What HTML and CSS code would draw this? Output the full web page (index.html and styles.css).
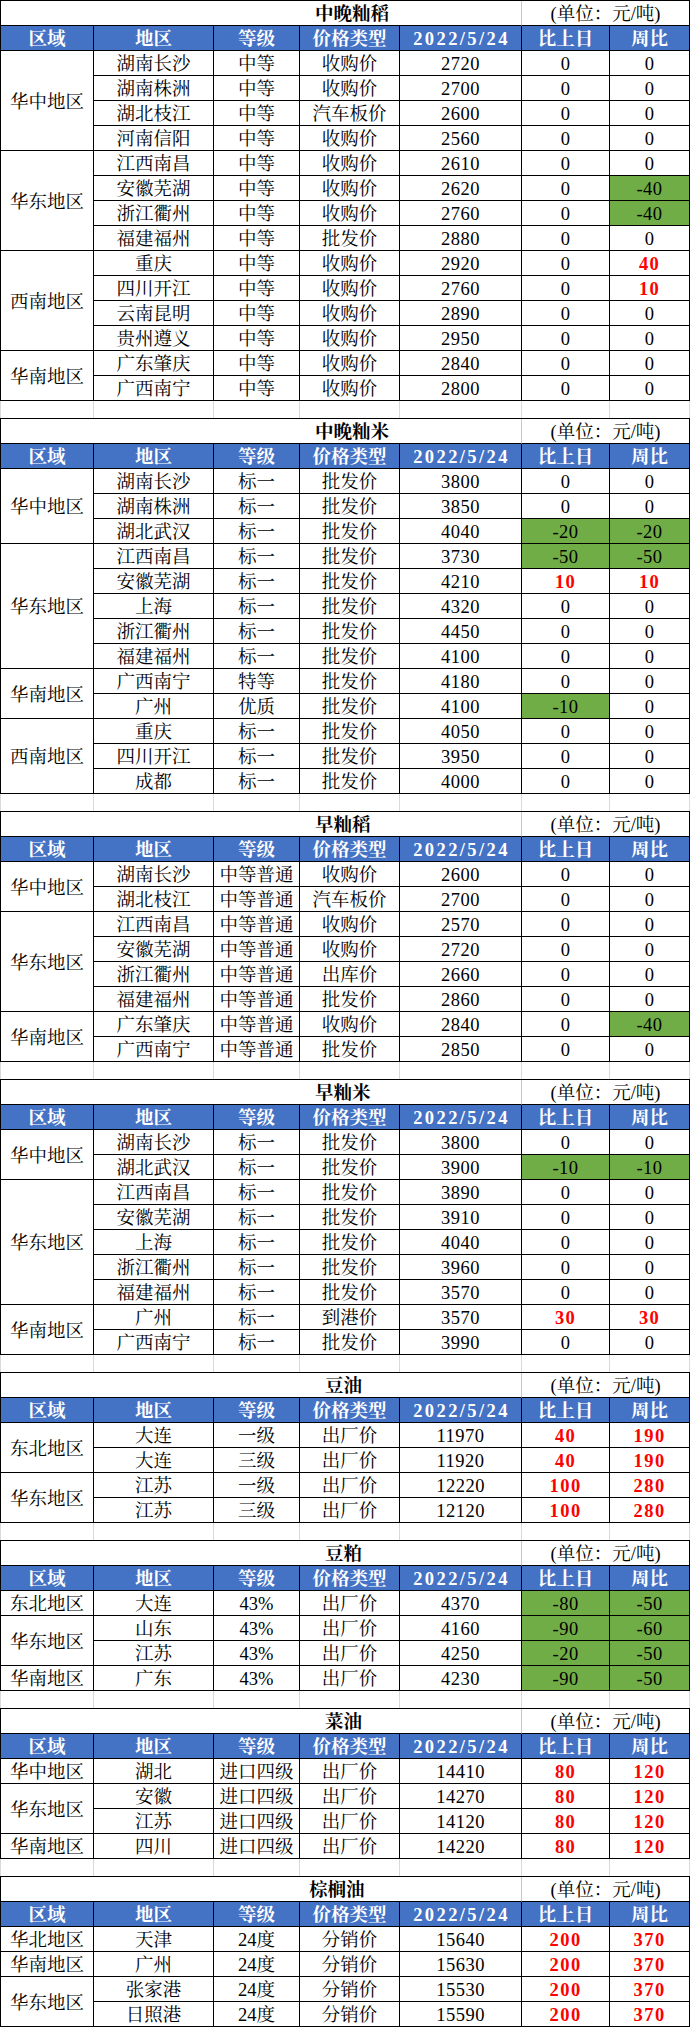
FILE: index.html
```html
<!DOCTYPE html>
<html lang="zh-CN">
<head>
<meta charset="utf-8">
<title>农产品价格</title>
<link rel="stylesheet" href="styles.css">
</head>
<body>

<table class="sheet">
<colgroup><col class="w1"><col class="w2"><col class="w3"><col class="w4"><col class="w5"><col class="w6"><col class="w7"></colgroup>
<tr><td colspan="5" class="title t-a">中晚籼稻</td><td colspan="2" class="unit">(单位：元/吨)</td></tr>
<tr class="head"><th>区域</th><th>地区</th><th>等级</th><th>价格类型</th><th class="date">2022/5/24</th><th>比上日</th><th>周比</th></tr>
<tr><td class="region" rowspan="4">华中地区</td><td>湖南长沙</td><td>中等</td><td>收购价</td><td class="num">2720</td><td class="num">0</td><td class="num">0</td></tr>
<tr><td>湖南株洲</td><td>中等</td><td>收购价</td><td class="num">2700</td><td class="num">0</td><td class="num">0</td></tr>
<tr><td>湖北枝江</td><td>中等</td><td>汽车板价</td><td class="num">2600</td><td class="num">0</td><td class="num">0</td></tr>
<tr><td>河南信阳</td><td>中等</td><td>收购价</td><td class="num">2560</td><td class="num">0</td><td class="num">0</td></tr>
<tr><td class="region" rowspan="4">华东地区</td><td>江西南昌</td><td>中等</td><td>收购价</td><td class="num">2610</td><td class="num">0</td><td class="num">0</td></tr>
<tr><td>安徽芜湖</td><td>中等</td><td>收购价</td><td class="num">2620</td><td class="num">0</td><td class="num down">-40</td></tr>
<tr><td>浙江衢州</td><td>中等</td><td>收购价</td><td class="num">2760</td><td class="num">0</td><td class="num down">-40</td></tr>
<tr><td>福建福州</td><td>中等</td><td>批发价</td><td class="num">2880</td><td class="num">0</td><td class="num">0</td></tr>
<tr><td class="region" rowspan="4">西南地区</td><td>重庆</td><td>中等</td><td>收购价</td><td class="num">2920</td><td class="num">0</td><td class="num up">40</td></tr>
<tr><td>四川开江</td><td>中等</td><td>收购价</td><td class="num">2760</td><td class="num">0</td><td class="num up">10</td></tr>
<tr><td>云南昆明</td><td>中等</td><td>收购价</td><td class="num">2890</td><td class="num">0</td><td class="num">0</td></tr>
<tr><td>贵州遵义</td><td>中等</td><td>收购价</td><td class="num">2950</td><td class="num">0</td><td class="num">0</td></tr>
<tr><td class="region" rowspan="2">华南地区</td><td>广东肇庆</td><td>中等</td><td>收购价</td><td class="num">2840</td><td class="num">0</td><td class="num">0</td></tr>
<tr><td>广西南宁</td><td>中等</td><td>收购价</td><td class="num">2800</td><td class="num">0</td><td class="num">0</td></tr>
</table>
<div class="gap"><span class="w1"></span><span class="w2"></span><span class="w3"></span><span class="w4"></span><span class="w5"></span><span class="w6"></span><span class="w7"></span></div>

<table class="sheet">
<colgroup><col class="w1"><col class="w2"><col class="w3"><col class="w4"><col class="w5"><col class="w6"><col class="w7"></colgroup>
<tr><td colspan="5" class="title t-a">中晚籼米</td><td colspan="2" class="unit">(单位：元/吨)</td></tr>
<tr class="head"><th>区域</th><th>地区</th><th>等级</th><th>价格类型</th><th class="date">2022/5/24</th><th>比上日</th><th>周比</th></tr>
<tr><td class="region" rowspan="3">华中地区</td><td>湖南长沙</td><td>标一</td><td>批发价</td><td class="num">3800</td><td class="num">0</td><td class="num">0</td></tr>
<tr><td>湖南株洲</td><td>标一</td><td>批发价</td><td class="num">3850</td><td class="num">0</td><td class="num">0</td></tr>
<tr><td>湖北武汉</td><td>标一</td><td>批发价</td><td class="num">4040</td><td class="num down">-20</td><td class="num down">-20</td></tr>
<tr><td class="region" rowspan="5">华东地区</td><td>江西南昌</td><td>标一</td><td>批发价</td><td class="num">3730</td><td class="num down">-50</td><td class="num down">-50</td></tr>
<tr><td>安徽芜湖</td><td>标一</td><td>批发价</td><td class="num">4210</td><td class="num up">10</td><td class="num up">10</td></tr>
<tr><td>上海</td><td>标一</td><td>批发价</td><td class="num">4320</td><td class="num">0</td><td class="num">0</td></tr>
<tr><td>浙江衢州</td><td>标一</td><td>批发价</td><td class="num">4450</td><td class="num">0</td><td class="num">0</td></tr>
<tr><td>福建福州</td><td>标一</td><td>批发价</td><td class="num">4100</td><td class="num">0</td><td class="num">0</td></tr>
<tr><td class="region" rowspan="2">华南地区</td><td>广西南宁</td><td>特等</td><td>批发价</td><td class="num">4180</td><td class="num">0</td><td class="num">0</td></tr>
<tr><td>广州</td><td>优质</td><td>批发价</td><td class="num">4100</td><td class="num down">-10</td><td class="num">0</td></tr>
<tr><td class="region" rowspan="3">西南地区</td><td>重庆</td><td>标一</td><td>批发价</td><td class="num">4050</td><td class="num">0</td><td class="num">0</td></tr>
<tr><td>四川开江</td><td>标一</td><td>批发价</td><td class="num">3950</td><td class="num">0</td><td class="num">0</td></tr>
<tr><td>成都</td><td>标一</td><td>批发价</td><td class="num">4000</td><td class="num">0</td><td class="num">0</td></tr>
</table>
<div class="gap"><span class="w1"></span><span class="w2"></span><span class="w3"></span><span class="w4"></span><span class="w5"></span><span class="w6"></span><span class="w7"></span></div>

<table class="sheet">
<colgroup><col class="w1"><col class="w2"><col class="w3"><col class="w4"><col class="w5"><col class="w6"><col class="w7"></colgroup>
<tr><td colspan="5" class="title t-a">早籼稻</td><td colspan="2" class="unit">(单位：元/吨)</td></tr>
<tr class="head"><th>区域</th><th>地区</th><th>等级</th><th>价格类型</th><th class="date">2022/5/24</th><th>比上日</th><th>周比</th></tr>
<tr><td class="region" rowspan="2">华中地区</td><td>湖南长沙</td><td>中等普通</td><td>收购价</td><td class="num">2600</td><td class="num">0</td><td class="num">0</td></tr>
<tr><td>湖北枝江</td><td>中等普通</td><td>汽车板价</td><td class="num">2700</td><td class="num">0</td><td class="num">0</td></tr>
<tr><td class="region" rowspan="4">华东地区</td><td>江西南昌</td><td>中等普通</td><td>收购价</td><td class="num">2570</td><td class="num">0</td><td class="num">0</td></tr>
<tr><td>安徽芜湖</td><td>中等普通</td><td>收购价</td><td class="num">2720</td><td class="num">0</td><td class="num">0</td></tr>
<tr><td>浙江衢州</td><td>中等普通</td><td>出库价</td><td class="num">2660</td><td class="num">0</td><td class="num">0</td></tr>
<tr><td>福建福州</td><td>中等普通</td><td>批发价</td><td class="num">2860</td><td class="num">0</td><td class="num">0</td></tr>
<tr><td class="region" rowspan="2">华南地区</td><td>广东肇庆</td><td>中等普通</td><td>收购价</td><td class="num">2840</td><td class="num">0</td><td class="num down">-40</td></tr>
<tr><td>广西南宁</td><td>中等普通</td><td>批发价</td><td class="num">2850</td><td class="num">0</td><td class="num">0</td></tr>
</table>
<div class="gap"><span class="w1"></span><span class="w2"></span><span class="w3"></span><span class="w4"></span><span class="w5"></span><span class="w6"></span><span class="w7"></span></div>

<table class="sheet">
<colgroup><col class="w1"><col class="w2"><col class="w3"><col class="w4"><col class="w5"><col class="w6"><col class="w7"></colgroup>
<tr><td colspan="5" class="title t-a">早籼米</td><td colspan="2" class="unit">(单位：元/吨)</td></tr>
<tr class="head"><th>区域</th><th>地区</th><th>等级</th><th>价格类型</th><th class="date">2022/5/24</th><th>比上日</th><th>周比</th></tr>
<tr><td class="region" rowspan="2">华中地区</td><td>湖南长沙</td><td>标一</td><td>批发价</td><td class="num">3800</td><td class="num">0</td><td class="num">0</td></tr>
<tr><td>湖北武汉</td><td>标一</td><td>批发价</td><td class="num">3900</td><td class="num down">-10</td><td class="num down">-10</td></tr>
<tr><td class="region" rowspan="5">华东地区</td><td>江西南昌</td><td>标一</td><td>批发价</td><td class="num">3890</td><td class="num">0</td><td class="num">0</td></tr>
<tr><td>安徽芜湖</td><td>标一</td><td>批发价</td><td class="num">3910</td><td class="num">0</td><td class="num">0</td></tr>
<tr><td>上海</td><td>标一</td><td>批发价</td><td class="num">4040</td><td class="num">0</td><td class="num">0</td></tr>
<tr><td>浙江衢州</td><td>标一</td><td>批发价</td><td class="num">3960</td><td class="num">0</td><td class="num">0</td></tr>
<tr><td>福建福州</td><td>标一</td><td>批发价</td><td class="num">3570</td><td class="num">0</td><td class="num">0</td></tr>
<tr><td class="region" rowspan="2">华南地区</td><td>广州</td><td>标一</td><td>到港价</td><td class="num">3570</td><td class="num up">30</td><td class="num up">30</td></tr>
<tr><td>广西南宁</td><td>标一</td><td>批发价</td><td class="num">3990</td><td class="num">0</td><td class="num">0</td></tr>
</table>
<div class="gap"><span class="w1"></span><span class="w2"></span><span class="w3"></span><span class="w4"></span><span class="w5"></span><span class="w6"></span><span class="w7"></span></div>

<table class="sheet">
<colgroup><col class="w1"><col class="w2"><col class="w3"><col class="w4"><col class="w5"><col class="w6"><col class="w7"></colgroup>
<tr><td colspan="5" class="title t-b">豆油</td><td colspan="2" class="unit">(单位：元/吨)</td></tr>
<tr class="head"><th>区域</th><th>地区</th><th>等级</th><th>价格类型</th><th class="date">2022/5/24</th><th>比上日</th><th>周比</th></tr>
<tr><td class="region" rowspan="2">东北地区</td><td>大连</td><td>一级</td><td>出厂价</td><td class="num">11970</td><td class="num up">40</td><td class="num up">190</td></tr>
<tr><td>大连</td><td>三级</td><td>出厂价</td><td class="num">11920</td><td class="num up">40</td><td class="num up">190</td></tr>
<tr><td class="region" rowspan="2">华东地区</td><td>江苏</td><td>一级</td><td>出厂价</td><td class="num">12220</td><td class="num up">100</td><td class="num up">280</td></tr>
<tr><td>江苏</td><td>三级</td><td>出厂价</td><td class="num">12120</td><td class="num up">100</td><td class="num up">280</td></tr>
</table>
<div class="gap"><span class="w1"></span><span class="w2"></span><span class="w3"></span><span class="w4"></span><span class="w5"></span><span class="w6"></span><span class="w7"></span></div>

<table class="sheet">
<colgroup><col class="w1"><col class="w2"><col class="w3"><col class="w4"><col class="w5"><col class="w6"><col class="w7"></colgroup>
<tr><td colspan="5" class="title t-b">豆粕</td><td colspan="2" class="unit">(单位：元/吨)</td></tr>
<tr class="head"><th>区域</th><th>地区</th><th>等级</th><th>价格类型</th><th class="date">2022/5/24</th><th>比上日</th><th>周比</th></tr>
<tr><td class="region">东北地区</td><td>大连</td><td>43%</td><td>出厂价</td><td class="num">4370</td><td class="num down">-80</td><td class="num down">-50</td></tr>
<tr><td class="region" rowspan="2">华东地区</td><td>山东</td><td>43%</td><td>出厂价</td><td class="num">4160</td><td class="num down">-90</td><td class="num down">-60</td></tr>
<tr><td>江苏</td><td>43%</td><td>出厂价</td><td class="num">4250</td><td class="num down">-20</td><td class="num down">-50</td></tr>
<tr><td class="region">华南地区</td><td>广东</td><td>43%</td><td>出厂价</td><td class="num">4230</td><td class="num down">-90</td><td class="num down">-50</td></tr>
</table>
<div class="gap"><span class="w1"></span><span class="w2"></span><span class="w3"></span><span class="w4"></span><span class="w5"></span><span class="w6"></span><span class="w7"></span></div>

<table class="sheet">
<colgroup><col class="w1"><col class="w2"><col class="w3"><col class="w4"><col class="w5"><col class="w6"><col class="w7"></colgroup>
<tr><td colspan="5" class="title t-b">菜油</td><td colspan="2" class="unit">(单位：元/吨)</td></tr>
<tr class="head"><th>区域</th><th>地区</th><th>等级</th><th>价格类型</th><th class="date">2022/5/24</th><th>比上日</th><th>周比</th></tr>
<tr><td class="region">华中地区</td><td>湖北</td><td>进口四级</td><td>出厂价</td><td class="num">14410</td><td class="num up">80</td><td class="num up">120</td></tr>
<tr><td class="region" rowspan="2">华东地区</td><td>安徽</td><td>进口四级</td><td>出厂价</td><td class="num">14270</td><td class="num up">80</td><td class="num up">120</td></tr>
<tr><td>江苏</td><td>进口四级</td><td>出厂价</td><td class="num">14120</td><td class="num up">80</td><td class="num up">120</td></tr>
<tr><td class="region">华南地区</td><td>四川</td><td>进口四级</td><td>出厂价</td><td class="num">14220</td><td class="num up">80</td><td class="num up">120</td></tr>
</table>
<div class="gap"><span class="w1"></span><span class="w2"></span><span class="w3"></span><span class="w4"></span><span class="w5"></span><span class="w6"></span><span class="w7"></span></div>

<table class="sheet">
<colgroup><col class="w1"><col class="w2"><col class="w3"><col class="w4"><col class="w5"><col class="w6"><col class="w7"></colgroup>
<tr><td colspan="5" class="title t-c">棕榈油</td><td colspan="2" class="unit">(单位：元/吨)</td></tr>
<tr class="head"><th>区域</th><th>地区</th><th>等级</th><th>价格类型</th><th class="date">2022/5/24</th><th>比上日</th><th>周比</th></tr>
<tr><td class="region">华北地区</td><td>天津</td><td>24度</td><td>分销价</td><td class="num">15640</td><td class="num up">200</td><td class="num up">370</td></tr>
<tr><td class="region">华南地区</td><td>广州</td><td>24度</td><td>分销价</td><td class="num">15630</td><td class="num up">200</td><td class="num up">370</td></tr>
<tr><td class="region" rowspan="2">华东地区</td><td>张家港</td><td>24度</td><td>分销价</td><td class="num">15530</td><td class="num up">200</td><td class="num up">370</td></tr>
<tr><td>日照港</td><td>24度</td><td>分销价</td><td class="num">15590</td><td class="num up">200</td><td class="num up">370</td></tr>
</table>

</body>
</html>
```

FILE: styles.css
```css
html, body {
  margin: 0;
  padding: 0;
  background: #ffffff;
}

body {
  font-family: "Liberation Serif", "Noto Serif CJK SC", "Noto Sans CJK SC", serif;
  font-size: 18.5px;
  color: #000000;
}

.sheet {
  border-collapse: separate;
  border-spacing: 0;
  table-layout: fixed;
  width: 690px;
  border-left: 1px solid #000000;
  border-top: 1px solid #000000;
}

.w1 { width: 93px; }
.w2 { width: 120px; }
.w3 { width: 86px; }
.w4 { width: 100px; }
.w5 { width: 122px; }
.w6 { width: 88px; }
.w7 { width: 80px; }

.sheet tr {
  height: 25px;
}

.sheet td,
.sheet th {
  box-sizing: border-box;
  height: 25px;
  padding: 2px 0 0 0;
  line-height: 22px;
  border-right: 1px solid #000000;
  border-bottom: 1px solid #000000;
  text-align: center;
  vertical-align: top;
  white-space: nowrap;
  overflow: visible;
  font-weight: normal;
}

.sheet td.title {
  text-align: left;
  font-weight: bold;
  border-right-color: #c8c8c8;
}

.sheet td.t-a { padding-left: 314px; }
.sheet td.t-b { padding-left: 324px; }
.sheet td.t-c { padding-left: 308px; }

.sheet td.unit {
  text-align: center;
}

.sheet .head th {
  background: #4472c4;
  color: #ffffff;
  font-weight: bold;
}

.sheet .head .date {
  letter-spacing: 2.4px;
  padding-left: 2px;
}

.sheet td.region {
  vertical-align: middle;
}

.num {
  letter-spacing: 0.5px;
}

.sheet .up {
  color: #ff0000;
  font-weight: bold;
  letter-spacing: 1.4px;
}

.sheet .down {
  background: #70ad47;
}

.gap {
  display: flex;
  height: 17px;
  border-left: 1px solid #d9d9d9;
}

.gap span {
  flex: none;
  box-sizing: border-box;
  height: 17px;
  border-right: 1px solid #d9d9d9;
}
```
